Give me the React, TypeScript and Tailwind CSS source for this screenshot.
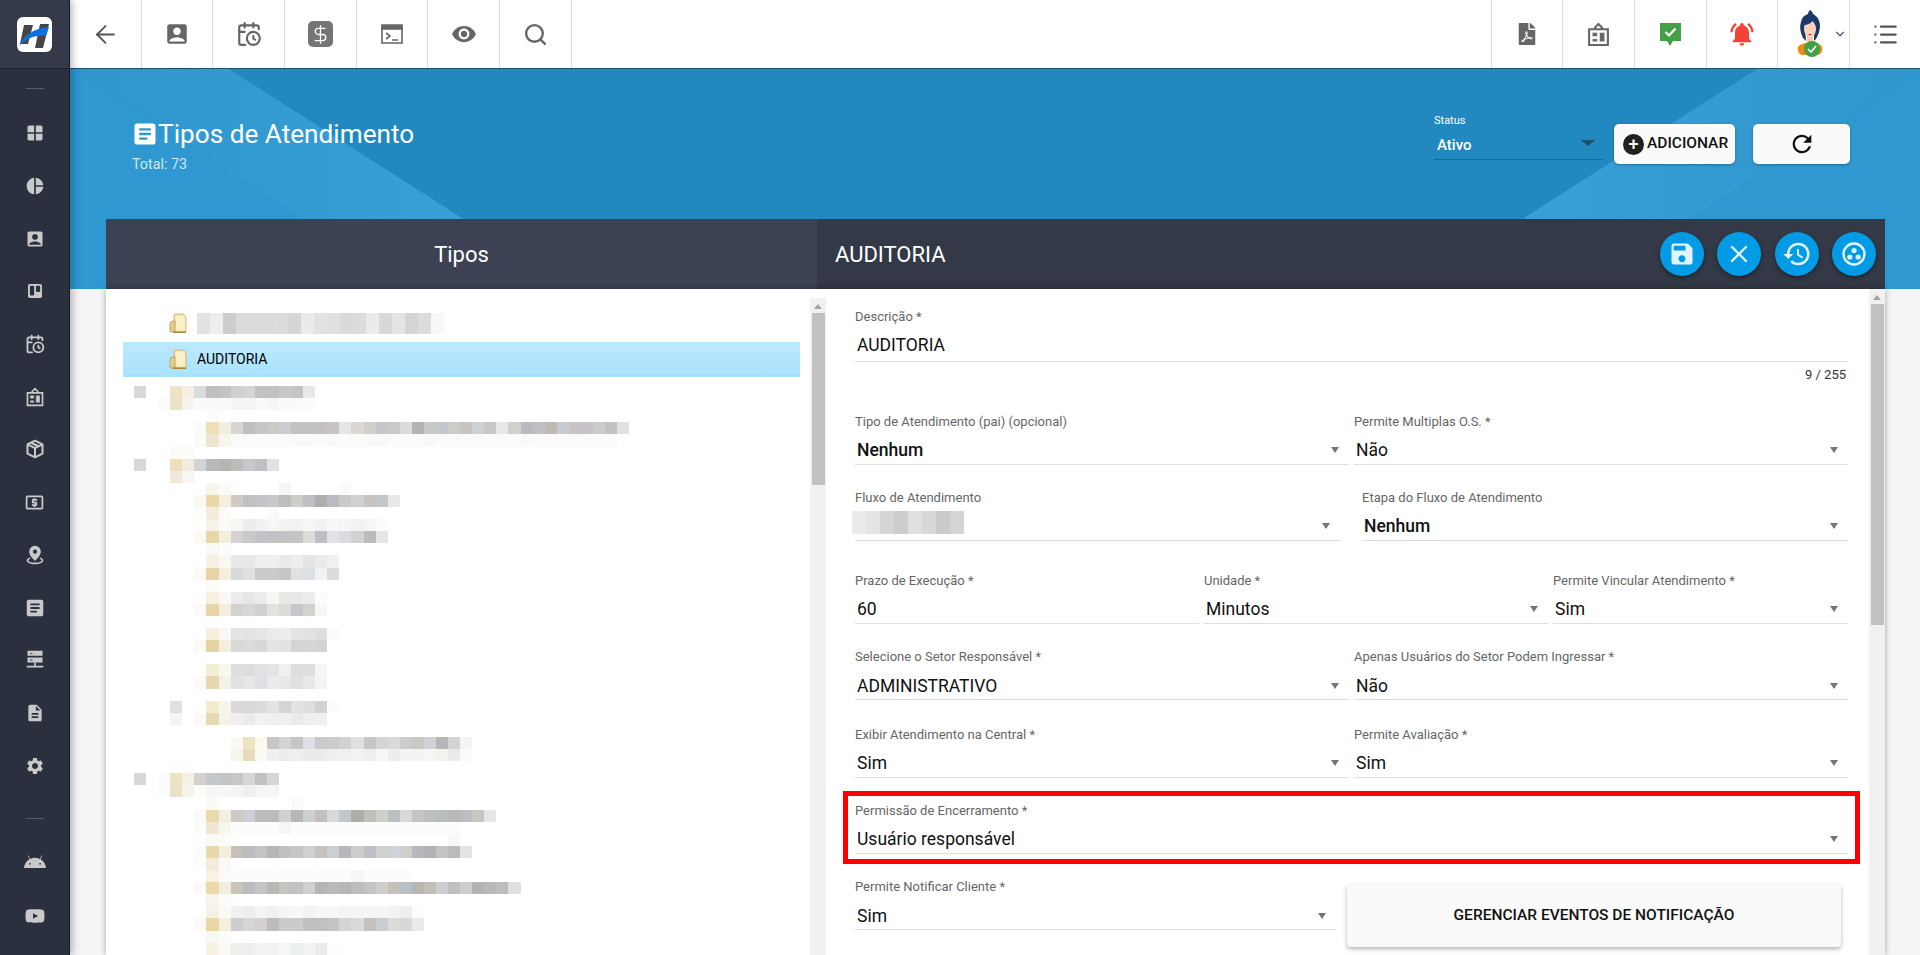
import { ArrowLeft, CalendarClock, ChevronDown, DollarSign, List, Search, X } from "lucide-react";
import { FaAndroid, FaFilePdf, FaTrello, FaYoutube } from "react-icons/fa";
import {
  MdAccountBox,
  MdArticle,
  MdDescription,
  MdHistory,
  MdNotificationsActive,
  MdOutlineLocalAtm,
  MdPieChart,
  MdRefresh,
  MdSave,
  MdSettings,
  MdVisibility,
  MdWindow,
} from "react-icons/md";

// pixelated (redacted) part of the tree: [row, first column, colours]
const mosaic: [number, number, string][] = [
  [0, 0, "d8d8d8"],
  [0, 3, "efe3c3 f4f0e3 dcdcdc bfbfbf c4c4c4 d0d0d0 d4d4d4 c2c2c2 c2c2c2 c8c8c8 c4c4c4 e8e8e8"],
  [1, 2, "fbfbfb ebe2c8 f6f3ea fafafa f9f9f9 f9f9f9 f5f5f5 f5f5f5 f9f9f9 f6f6f6 fafafa fafafa fcfcfc"],
  [2, 6, "fdfcfa"],
  [3, 5, "fbfbf8 eddfb8 f3efe0 d8d5d2 bfbfbf c6c6c6 cbcac7 cdcdd1 c2c2c2 c2c2c2 c2c2c2 c8c4c4 e6e6e8 dbd8d4 d0cfcc c6c6cc cacaca dcdcdc b4b4b4 cbc9c6 c4c8cc cdccc9 c8c4c2 cdd1d4 c8c8c8 e8e8e8 d2d0cc bbbbbf c0c0c4 bfb8b4 c8ccd2 c8c4c4 c6c4c8 cccccc c2c2c2 e2e2e2"],
  [4, 5, "fafaf8 ede5cf f8f6ef fafafa fafafa fbfbfb fafafa fafafa f9f9f9 f9f9f9 fafafa f9f9f9 fbfbfb fbfbfb f9f9f9 f9f9f9 fafafa fafafa fbfbfb f9f9f9 fafafa fafafa fafafa fafafa fbfbfb fafafa fbfbfb f9f9f9 fafafa fafafa fafafa fbfbfb fafafa fafafa fbfbfb"],
  [5, 3, "fbfaf7 fcfbf9"],
  [6, 0, "d8d8d8"],
  [6, 3, "eddfb9 f3ecdc d4d4d4 b8b8b8 b4b4b4 bdbcb9 c8c8cc bfbfc4 e2e2e2"],
  [7, 3, "f0e9dc f8f6f0"],
  [8, 6, "f8f5ea fbfaf5"],
  [8, 12, "f5f5f5"],
  [8, 17, "fafafa"],
  [9, 5, "faf8f2 e8d8aa f3eedd cecbc6 c2bfc2 c4c4c8 c6c8cc bdbdbd cecec9 bdbfc2 aeaeae b9bbc2 ccc9c6 cfd0d2 c9c4bf c6c6c8 e8e9eb"],
  [10, 5, "fcfcfa f4eddd fbfaf6"],
  [10, 11, "fafafa"],
  [11, 6, "f7f2e6 faf9f5 f6f6f4 ededed f1f1f1 f6f6f6 f3f3f3 f1f1f1 f6f6f6 f1f1f1 f7f7f7 f6f6f6 f2f2f0 f6f6f6 fbfbfb"],
  [12, 5, "faf9f5 e6d6a8 f3eedd d4d2d4 cdc9c9 c4c4c6 c2c2c8 c4c4c6 c6c4c6 dcdcd9 bcc0c6 e2e2e2 dcdce0 d2d2d2 bbbbbb e6e6e6"],
  [13, 6, "fbf9f3 fcfcfa"],
  [14, 6, "f6f1e4 f9f8f3 e8e8e8 e8e8e8 eef0f0 eef0f0 e9eaea eeeeee e4e4e4 eaeaea f0f0f0"],
  [15, 5, "faf9f5 e6d6a6 f3eedd d9d9dc e0e0de cbcbcb cbcbcb c6c6c6 e0e2e0 dcdfe4 f1f3f1 dcdcdc"],
  [16, 6, "fcfbf8"],
  [17, 6, "f6f0df f9f8f3 ececec e6e6e6 ececec f6f6f2 e8e8e6 e8e8e6 ececec fcfcfc"],
  [18, 5, "faf9f5 e6d6a6 f3eedd d4d2d0 d8d6d6 d0d0d0 e2e2e0 dcdbd6 c4c6cc d4d2ce f6f7f9"],
  [19, 6, "fdfdfb"],
  [20, 6, "f5efdc f9f8f3 e4e4e4 e2e2e2 e6e6e6 ebebeb ededed e4e4e8 e2e2e2 dedede fbfbfb"],
  [21, 5, "faf9f3 e4d49f f3eedd d9d9d6 dcdadc d8d8d8 e2e4e6 e2e2de d4d4d2 d6d6d6 d4d4d6"],
  [23, 6, "f5eed6 faf7ee dedede dcdcde e2e2e4 e4e4e4 f0f0f0 dedede dedede f5f6f8"],
  [24, 5, "fbfaf7 e6d8ae f5f1e8 e2e2e2 e6e6e4 e0e0e4 ebebed e8e8e6 e0e0e2 e8e8e8 f4f4f5"],
  [26, 3, "e0e0e0"],
  [26, 6, "f3ebcf f8f5ea dcd9dc d8d8d8 dcdcda e0e4e2 d2d4d6 e2e2e4 dfdedc d0d2d4 fcfcfc"],
  [27, 3, "f4f4f4"],
  [27, 5, "fbfaf6 e6dab4 f6f3e6 f0eef0 ebebeb f2f2f2 eef0f0 f0f0f0 eaeaea efefef f0f0f0"],
  [29, 8, "fbf9f3 efe4c0 fbf9f2 c9c6c4 d4d4d4 c6c6c6 e0e0e4 c9c9ce cecbcb d2d2d6 e0e0dc c4c6cc d6d4d4 dadadc cccccb c8c8c6 d0d2da b8b6b8 d4d4d4 f2f4f6"],
  [30, 8, "f7f5ee e6dcbc fbfaf3 efefed ececec eeeeee ebebeb ebebeb efefef f0f0f0 f2f2f2 eeeeee f6f6f6 ededed f3f3f3 f3f3f3 f4f6f7 f4f2ee e8eaec fafbfb"],
  [31, 3, "fdfdfb fdfdfc"],
  [32, 0, "d8d8d8"],
  [32, 2, "fcfcfc eee4c4 f4f0e2 d4d0ce c4c8cc c4c4c4 c8c8c8 d6d6d6 c2c0c0 d6d6da"],
  [33, 2, "fcfcfa ebe2c8 f6f3e8 fbfbfa f6f6f6 f6f6f6 f5f5f5 efefef f5f6f6 f5f6f6"],
  [34, 6, "fcfaf6"],
  [34, 13, "fbfbfb"],
  [35, 5, "fbfafa ead9ab f3eedd cec9c4 ccd0d6 bdbbbb bbbbb9 ced2d2 b4b6b8 ccd0d0 c2bfc0 d6d8da c2c6cc adadab bfbfbc d0cec9 bcbfc2 d8d8d8 c4c4c6 c0bfbf b9bdbd b8b8b8 bbbdc0 c6c6c2 e6e6e6"],
  [36, 5, "fbfbfa efe7d4 f7f5ec fcfcfc fcfcfc fcfcfc fcfcfc f6f6f6 fcfcfc fcfcfc fcfcfc fcfcfc fcfcfc fcfcfc fcfcfc fcfcfc fcfcfc fcfcfc fcfcfc fcfcfc fcfcfc fcfcfc"],
  [37, 6, "fbf9f2 fcfbf7"],
  [37, 26, "f7f7f7"],
  [38, 5, "fbfbf9 e9d8a8 f3eedd c6c0ba bbbcc0 c4c4c6 b8b4b2 c0c0c0 c4c6c8 d0d0d0 c8c2bc c9d0d4 b8b6ba cdccc8 bfbfc8 d0d0cc cfd2d6 cececa b8b8bc b4b2b2 c4c4c4 bbbbbb e4e4e6"],
  [39, 5, "fcfcfb f3ecdc fafaf5"],
  [40, 6, "f7f2e4 fbfaf6 fcfcfc fcfcfc fcfcfc fcfcfc fcfcfc fcfcfc fcfcfc fcfcfc fcfcfc fcfcfc f6f6f6 fcfcfc fcfcfc fcfcfc fcfcfc"],
  [41, 5, "fbfaf6 e9d9ab f3eedd c9c4bc bbbdc2 c4c4c8 bbb6b4 c4c4c0 c0c2c6 d0d0cc b9b4b2 b8babb b6b6b6 bfbcbc c4c4c6 cecece c6c0ba b9bfc8 b8b6b2 c4c0b9 ccced6 bfc0c0 cecece b2b2b2 b8baba bfbcbc dfe0e6"],
  [42, 6, "f7f4ea fcfbf8"],
  [43, 6, "f6f1e4 fbf9f3 f0f0f0 ededed f3f5f3 f1f1f1 f5f5f3 f7f7f5 f3f3f3 f7f7f7 f7f7f7 f5f5f5 f5f5f5 f5f5f5 f5f5f5 f3f3f3 eeeeee fcfcfc"],
  [44, 5, "fbfaf6 e9d7a6 f3eedd cecbce d6d6da d4d0ce bdbdbd cbcbcb cbcbcb c0c0c0 c0c0c2 c4c4c8 d8d4d6 dadadc c4c0bd c9cdd0 dcdcd9 d8d8d8 e9eaee"],
  [45, 6, "f9f7f2 fcfbf8"],
  [46, 6, "f6f1e0 fbf9f3 f0efee edeef0 f3f3f3 f1f1f1 f7f7f7 ecf0f0 f3f3f3 ebebeb fcfdfd"],
];

const firstRowBlur = "e2e2e2 eeeeee cdcdcd dbdbdb dbdbdb dbdbdb dcdcdc d6d6d6 ebebee e2e2e2 e0e0e0 dadada dcdcdc ebebeb d8d8d8 e4e4e4 d4d4d4 dcdcdc f8f8fa".split(" ");
const fluxoBlur = "eaeaea e4e4e4 d6d6d6 cdcdcd e0e0e0 d8d8d8 cbcbcb d4d4d4".split(" ");

function Logo() {
  return (
    <div className="h-[35px] w-[35px] rounded-[6px] bg-white">
      <svg width="35" height="35" viewBox="0 0 35 35">
        <path d="M7 8h9l-5 19H3z" fill="#454545" />
        <path d="M23 7h9l-6 24h-8z" fill="#454545" />
        <path d="M2 29C6 19 17 11 32 10l-3 9c-10-1-20 2-27 10z" fill="#0a72e0" />
      </svg>
    </div>
  );
}

function PinIcon() {
  return (
    <svg width="20" height="20" viewBox="0 0 24 24" fill="currentColor">
      <path d="M12 1a7 7 0 0 0-7 7c0 5 7 11 7 11s7-6 7-11a7 7 0 0 0-7-7zm0 9.5A2.5 2.5 0 1 1 12 5.500a2.500 2.500 0 0 1 0 5z" />
      <path d="M5.500 15C3.500 16 2 17.200 2 18.500 2 21 6.500 23 12 23s10-2 10-4.500c0-1.300-1.500-2.500-3.500-3.500l-1 1.500c1.500.7 2.500 1.400 2.500 2 0 1.200-3 2.500-8 2.500s-8-1.300-8-2.500c0-.6 1-1.300 2.500-2z" />
    </svg>
  );
}

function ServerIcon() {
  return (
    <svg width="20" height="20" viewBox="0 0 24 24" fill="currentColor">
      <path d="M3 1h18v6H3zM3 9h18v6H3z" />
      <path d="M11 15h2v4h9v2H2v-2h9z" />
      <path d="M6 3.500h3v1H6zM6 11.500h3v1H6z" fill="#2b303e" />
    </svg>
  );
}

function BoxIcon() {
  return (
    <svg width="20" height="20" viewBox="0 0 24 24" fill="none" stroke="currentColor" strokeWidth="2.400" strokeLinejoin="round">
      <path d="M12 2l9 4.500v11L12 22l-9-4.500v-11z" />
      <path d="M3 6.500l9 4.500 9-4.500M12 11v11M7.500 4.500l9 4.500" />
    </svg>
  );
}

function BoardIcon({ size, hole }: { size: number; hole: string }) {
  return (
    <svg width={size} height={size} viewBox="0 0 24 24" fill="none" stroke="currentColor" strokeWidth="2">
      <path d="M3 7h18v15H3zM8 6l4-4 4 4" />
      <path d="M6 10h5v4H6zM6 16h5v3H6zM13 10h5v9h-5z" fill="currentColor" stroke={hole} strokeWidth="0.500" />
    </svg>
  );
}

function TerminalIcon() {
  return (
    <svg width="24" height="24" viewBox="0 0 24 24" fill="none" stroke="currentColor" strokeWidth="1.600">
      <path d="M2 3h20v18H2z" />
      <path d="M2 4h20v3H2z" fill="currentColor" />
      <path d="M6 11l4 3-4 3M12 18h6" />
    </svg>
  );
}

function MessageCheckIcon() {
  return (
    <svg width="23" height="23" viewBox="0 0 23 23">
      <path d="M1 0h21v18H14l-3 5-3-5H1z" fill="#43a047" />
      <path d="M6.500 9l3.500 3.500 6.500-7" fill="none" stroke="#fff" strokeWidth="2.200" />
    </svg>
  );
}

function Avatar() {
  return (
    <svg width="28" height="48" viewBox="0 0 28 48">
      <path d="M2 37c2-3 7-4 8-4h8c2 0 7 1 8 4 1 4-1 7-4 8H6c-3-1-5-4-4-8z" fill="#ee8a12" />
      <path d="M11 26h6v8l-3 3-3-3z" fill="#f3c4a5" />
      <path d="M14 0c2 1 3 3 3 4 4 2 7 6 7 12 0 5-2 9-4 13l-2 2V16H9l1 15-3-3C5 23 3 18 5 12c1-5 4-7 7-8 0-2 1-3 2-4z" fill="#1b3a6b" />
      <ellipse cx="14" cy="19" rx="6" ry="8.500" fill="#f6d2ba" />
      <path d="M8 15c3 0 8-2 9-5 1 3 2 5 4 6l-1-7-6-2-7 4z" fill="#1b3a6b" />
      <path d="M12 24h4l-2 1.500z" fill="#c2185b" />
      <circle cx="16" cy="39" r="8" fill="#43a047" />
      <path d="M12 39l3 3 5-6" fill="none" stroke="#fff" strokeWidth="1.600" />
    </svg>
  );
}

function ClusterIcon() {
  return (
    <svg width="26" height="26" viewBox="0 0 26 26" fill="none">
      <circle cx="13" cy="13" r="10.500" stroke="#e1f5fe" strokeWidth="2.400" />
      <circle cx="13" cy="9.500" r="2.600" fill="#e1f5fe" />
      <circle cx="8.800" cy="16" r="2.600" fill="#e1f5fe" />
      <circle cx="17.200" cy="16" r="2.600" fill="#e1f5fe" />
    </svg>
  );
}

function FolderIcon() {
  return (
    <svg width="18" height="21" viewBox="0 0 18 21" className="shrink-0">
      <path d="M5 2q0-1 1-1h8l3 3v14q0 1-1 1H5z" fill="#f5e6b4" stroke="#c9a95e" strokeWidth="0.800" />
      <path d="M7 3h7l2 2v12H7z" fill="#fbf0c8" />
      <path d="M1 11q0-3 3-3h2v11H2q-1 0-1-1z" fill="#e3cc8e" stroke="#b8975a" strokeWidth="0.800" />
      <path d="M4 18.500h13v1.500H4z" fill="#a8863f" />
    </svg>
  );
}

function Arrow() {
  return (
    <svg width="8" height="6" viewBox="0 0 8 6" className="shrink-0">
      <path d="M0 0h8L4 6z" fill="#757575" />
    </svg>
  );
}

function TopCell({ children, right }: { children: React.ReactNode; right?: boolean }) {
  return (
    <div className={`flex h-full w-[71.700px] items-center justify-center border-[#dcdcdc] ${right ? "border-l" : "border-r"}`}>
      {children}
    </div>
  );
}

function Field({
  label,
  value,
  bold,
  text,
  blur,
  low,
  className,
}: {
  label: string;
  value?: string;
  bold?: boolean;
  text?: boolean;
  blur?: boolean;
  low?: boolean;
  className?: string;
}) {
  return (
    <div className={`flex h-[50px] flex-col border-b border-[#dedede] ${className ?? ""}`}>
      <div className="h-[14px] text-[13px] leading-[14px] whitespace-nowrap text-[#666]">{label}</div>
      <div className={`flex flex-1 items-center justify-between pr-[10px] pl-[2px] ${low ? "pt-[9px]" : "pt-[6px]"}`}>
        {blur ? (
          <div className="-mt-[6px] -ml-[5px] flex h-[23px]">
            {fluxoBlur.map((c, i) => (
              <div key={i} className="h-full w-[14px]" style={{ backgroundColor: `#${c}` }} />
            ))}
          </div>
        ) : (
          <span className={`text-[17.500px] leading-[20px] text-[#111] ${bold ? "font-medium" : ""}`}>{value}</span>
        )}
        {!text && <Arrow />}
      </div>
    </div>
  );
}

function CircleBtn({ children }: { children: React.ReactNode }) {
  return (
    <div className="flex h-[44px] w-[44px] items-center justify-center rounded-full bg-[#039be5] text-[#e1f5fe] shadow-[0_2px_4px_rgba(0,0,0,0.4)]">
      {children}
    </div>
  );
}

function Scrollbar({ top, thumb }: { top: string; thumb: string }) {
  return (
    <div className={`flex w-[16px] shrink-0 flex-col items-center bg-[#f1f1f1] ${top}`}>
      <div className="mt-[6px] mb-[4px] h-0 w-0 border-x-[4px] border-b-[5px] border-x-transparent border-b-[#a3a3a3]" />
      <div className={`w-[13px] shrink-0 bg-[#c1c1c1] ${thumb}`} />
    </div>
  );
}

export default function App() {
  const side = [
    <MdWindow size={20} />,
    <MdPieChart size={20} />,
    <MdAccountBox size={20} />,
    <FaTrello size={16} />,
    <CalendarClock size={20} strokeWidth={2.2} />,
    <BoardIcon size={20} hole="#2b303e" />,
    <BoxIcon />,
    <MdOutlineLocalAtm size={21} />,
    <PinIcon />,
    <MdArticle size={22} />,
    <ServerIcon />,
    <MdDescription size={20} />,
    <MdSettings size={20} />,
  ];

  return (
    <div className="flex h-screen w-full overflow-hidden bg-[#f5f5f5] [font-family:Roboto,sans-serif]">
      {/* sidebar */}
      <aside className="relative z-20 flex w-[70px] shrink-0 flex-col items-center border-r border-[#141c2b] bg-[#2b303e] text-[#c9c9c9] shadow-[2px_0_8px_rgba(0,0,0,0.3)]">
        <div className="flex h-[69px] w-full shrink-0 items-center justify-center border-b border-[#1c2230] bg-[#343a49]">
          <Logo />
        </div>
        <div className="mt-[19px] h-px w-[18px] shrink-0 bg-[#555b68]" />
        <div className="mt-[18px] flex w-full flex-col">
          {side.map((icon, i) => (
            <div key={i} className="flex h-[52.700px] items-center justify-center">
              {icon}
            </div>
          ))}
        </div>
        <div className="mt-[26px] h-px w-[18px] shrink-0 bg-[#555b68]" />
        <div className="mt-[18px] flex h-[52.700px] items-center justify-center">
          <FaAndroid size={22} />
        </div>
        <div className="flex h-[52.700px] items-center justify-center">
          <FaYoutube size={20} />
        </div>
      </aside>

      <div className="flex min-w-0 flex-1 flex-col">
        {/* top bar */}
        <header className="relative z-10 flex h-[69px] shrink-0 items-center justify-between border-b border-[#17536f] bg-white text-[#666]">
          <div className="flex h-full items-center">
            <TopCell>
              <ArrowLeft size={29} strokeWidth={1.500} className="text-[#555]" />
            </TopCell>
            <TopCell>
              <MdAccountBox size={26} />
            </TopCell>
            <TopCell>
              <CalendarClock size={26} strokeWidth={2} />
            </TopCell>
            <TopCell>
              <div className="flex h-[26px] w-[25px] items-center justify-center rounded-[5px] bg-[#757575] text-white">
                <DollarSign size={21} strokeWidth={1.500} />
              </div>
            </TopCell>
            <TopCell>
              <TerminalIcon />
            </TopCell>
            <TopCell>
              <MdVisibility size={26} />
            </TopCell>
            <TopCell>
              <Search size={25} strokeWidth={2.300} />
            </TopCell>
          </div>
          <div className="flex h-full items-center">
            <TopCell right>
              <FaFilePdf size={22} />
            </TopCell>
            <TopCell right>
              <BoardIcon size={25} hole="#fff" />
            </TopCell>
            <TopCell right>
              <MessageCheckIcon />
            </TopCell>
            <TopCell right>
              <MdNotificationsActive size={28} className="text-[#f44336]" />
            </TopCell>
            <div className="flex h-full w-[71.700px] items-center border-l border-[#dcdcdc] pl-[18px]">
              <Avatar />
              <ChevronDown size={14} className="ml-[9px] text-[#4a5568]" strokeWidth={2} />
            </div>
            <div className="flex h-full w-[71px] items-center justify-center border-l border-[#dcdcdc]">
              <List size={27} strokeWidth={2} className="text-[#555]" />
            </div>
          </div>
        </header>

        <div className="relative flex min-h-0 flex-1 flex-col">
          {/* blue backdrop with the diagonal bands */}
          <svg className="absolute top-0 left-0 h-[220px] w-full" viewBox="0 0 1850 220" preserveAspectRatio="none">
            <defs>
              <linearGradient id="band" x1="0" y1="0" x2="1" y2="0">
                <stop offset="0" stopColor="#2f96cd" />
                <stop offset="1" stopColor="#3aa3d9" />
              </linearGradient>
              <linearGradient id="bandR" x1="1" y1="0" x2="0" y2="0">
                <stop offset="0" stopColor="#2f96cd" />
                <stop offset="1" stopColor="#3aa3d9" />
              </linearGradient>
            </defs>
            <rect width="1850" height="220" fill="#2189bf" />
            <path d="M0 0h3l337 220H0z" fill="#2f98d0" />
            <path d="M3 0h156l344 220H340z" fill="url(#band)" />
            <path d="M1687 0h163v3L1511 220h-168z" fill="url(#bandR)" />
            <path d="M1850 3v217h-339z" fill="#2f98d0" />
          </svg>

          {/* page title and controls */}
          <div className="relative flex h-[150px] shrink-0 justify-between pr-[70px] pl-[62px]">
            <div className="flex flex-col pt-[49px]">
              <div className="flex h-[32px] items-center text-white">
                <MdArticle size={28} className="-ml-[1px] shrink-0" />
                <span className="ml-[-1px] text-[26.200px] leading-[32px] whitespace-nowrap">Tipos de Atendimento</span>
              </div>
              <div className="mt-[6px] text-[14.300px] leading-[16px] text-[#cfeafa]">Total: 73</div>
            </div>
            <div className="flex items-start pt-[44px]">
              <div className="flex h-[47px] w-[169px] flex-col border-b border-[#1a6a96]">
                <div className="pt-[1px] text-[11px] leading-[14px] text-white">Status</div>
                <div className="flex flex-1 items-center justify-between pt-[4px] pr-[8px] pl-[3px]">
                  <span className="text-[15px] font-medium text-white">Ativo</span>
                  <div className="mb-[6px] h-0 w-0 border-x-[7px] border-t-[6px] border-x-transparent border-t-[#1d4f70]" />
                </div>
              </div>
              <div className="mt-[11px] ml-[11px] flex h-[40px] w-[121px] items-center rounded-[5px] bg-[#fafafa] pl-[9px] shadow-[0_1px_3px_rgba(0,0,0,0.3)]">
                <div className="flex h-[21px] w-[21px] shrink-0 items-center justify-center rounded-full bg-[#212121] text-[18px] leading-none font-medium text-white">
                  +
                </div>
                <span className="ml-[3px] text-[15.500px] font-medium text-[#111]">ADICIONAR</span>
              </div>
              <div className="mt-[11px] ml-[18px] flex h-[40px] w-[97px] items-center justify-center rounded-[5px] bg-[#fafafa] text-[#111] shadow-[0_1px_3px_rgba(0,0,0,0.3)]">
                <MdRefresh size={28} />
              </div>
            </div>
          </div>

          {/* tabs header */}
          <div className="relative mr-[35px] ml-[36px] flex h-[70px] shrink-0 text-white">
            <div className="flex w-[711px] items-center justify-center bg-[#3c4254] text-[22px]">Tipos</div>
            <div className="flex flex-1 items-center justify-between bg-[#333946] pr-[9px] pl-[18px]">
              <span className="text-[22px]">AUDITORIA</span>
              <div className="flex items-center gap-[13.300px]">
                <CircleBtn>
                  <MdSave size={28} />
                </CircleBtn>
                <CircleBtn>
                  <X size={28} strokeWidth={2} />
                </CircleBtn>
                <CircleBtn>
                  <MdHistory size={30} />
                </CircleBtn>
                <CircleBtn>
                  <ClusterIcon />
                </CircleBtn>
              </div>
            </div>
          </div>

          {/* body */}
          <div className="relative mr-[35px] ml-[36px] flex min-h-0 flex-1 overflow-hidden bg-white shadow-[0_0_6px_rgba(0,0,0,0.35)]">
            {/* tree */}
            <div className="flex w-[720px] shrink-0">
              <div className="min-w-0 flex-1 overflow-hidden pt-[17px] pl-[17px]">
                <div className="flex h-[35px] items-center pl-[46px]">
                  <FolderIcon />
                  <div className="ml-[10px] flex h-[21px]">
                    {firstRowBlur.map((c, i) => (
                      <div key={i} className="h-full w-[13px]" style={{ backgroundColor: `#${c}` }} />
                    ))}
                  </div>
                </div>
                <div className="mt-px flex h-[35px] w-[677px] items-center bg-gradient-to-b from-[#bde9fe] to-[#a9e2fd] pl-[46px]">
                  <FolderIcon />
                  <span className="ml-[10px] text-[14px] text-black">AUDITORIA</span>
                </div>
                <svg width="600" height="570" className="mt-[9px] ml-[11px]" shapeRendering="crispEdges">
                  {mosaic.map(([row, col, colours]) =>
                    colours.split(" ").map((c, i) => (
                      <rect key={`${row}-${col}-${i}`} x={(col + i) * 12.08} y={row * 12.1} width={12.08} height={12.1} fill={`#${c}`} />
                    )),
                  )}
                </svg>
              </div>
              <Scrollbar top="mt-[9px]" thumb="h-[172px]" />
            </div>

            {/* form */}
            <div className="flex min-w-0 flex-1">
              <div className="min-w-0 flex-1 overflow-hidden pt-[21px] pr-[21px] pl-[29px]">
                <div className="flex h-[52px] flex-col border-b border-[#dedede]">
                  <div className="h-[14px] text-[13px] leading-[14px] text-[#666]">Descrição *</div>
                  <div className="flex flex-1 items-center pt-[5px] pl-[2px] text-[17.500px] text-[#111]">AUDITORIA</div>
                </div>
                <div className="flex h-[53px] items-start justify-end pt-[6px] pr-[2px] text-[13px] leading-[14px] text-[#333]">
                  9 / 255
                </div>

                <div className="grid grid-cols-2 gap-x-[5px]">
                  <Field label="Tipo de Atendimento (pai) (opcional)" value="Nenhum" bold />
                  <Field label="Permite Multiplas O.S. *" value="Não" />
                </div>

                <div className="mt-[26px] grid grid-cols-[485px_486px] gap-x-[22px]">
                  <Field label="Fluxo de Atendimento" blur />
                  <Field label="Etapa do Fluxo de Atendimento" value="Nenhum" bold />
                </div>

                <div className="mt-[33px] grid grid-cols-[344px_344px_295px] gap-x-[5px]">
                  <Field label="Prazo de Execução *" value="60" text />
                  <Field label="Unidade *" value="Minutos" />
                  <Field label="Permite Vincular Atendimento *" value="Sim" />
                </div>

                <div className="mt-[26px] grid grid-cols-2 gap-x-[5px]">
                  <Field label="Selecione o Setor Responsável *" value="ADMINISTRATIVO" low />
                  <Field label="Apenas Usuários do Setor Podem Ingressar *" value="Não" low />
                </div>

                <div className="mt-[28px] grid grid-cols-2 gap-x-[5px]">
                  <Field label="Exibir Atendimento na Central *" value="Sim" />
                  <Field label="Permite Avaliação *" value="Sim" />
                </div>

                <div className="relative mt-[26px]">
                  <Field label="Permissão de Encerramento *" value="Usuário responsável" />
                  <div className="absolute -top-[13px] -right-[12px] -bottom-[10px] -left-[12px] border-[5px] border-[#ff0000]" />
                </div>

                <div className="mt-[26px] flex items-start">
                  <Field label="Permite Notificar Cliente *" value="Sim" low className="w-[481px]" />
                  <div className="mt-[4px] ml-[11px] flex h-[63px] w-[494px] shrink-0 items-center justify-center rounded-[4px] bg-[#fafafa] text-[15.500px] font-medium text-[#111] shadow-[0_2px_4px_rgba(0,0,0,0.3)]">
                    GERENCIAR EVENTOS DE NOTIFICAÇÃO
                  </div>
                </div>
              </div>
              <Scrollbar top="" thumb="h-[321px]" />
            </div>
          </div>
        </div>
      </div>
    </div>
  );
}
